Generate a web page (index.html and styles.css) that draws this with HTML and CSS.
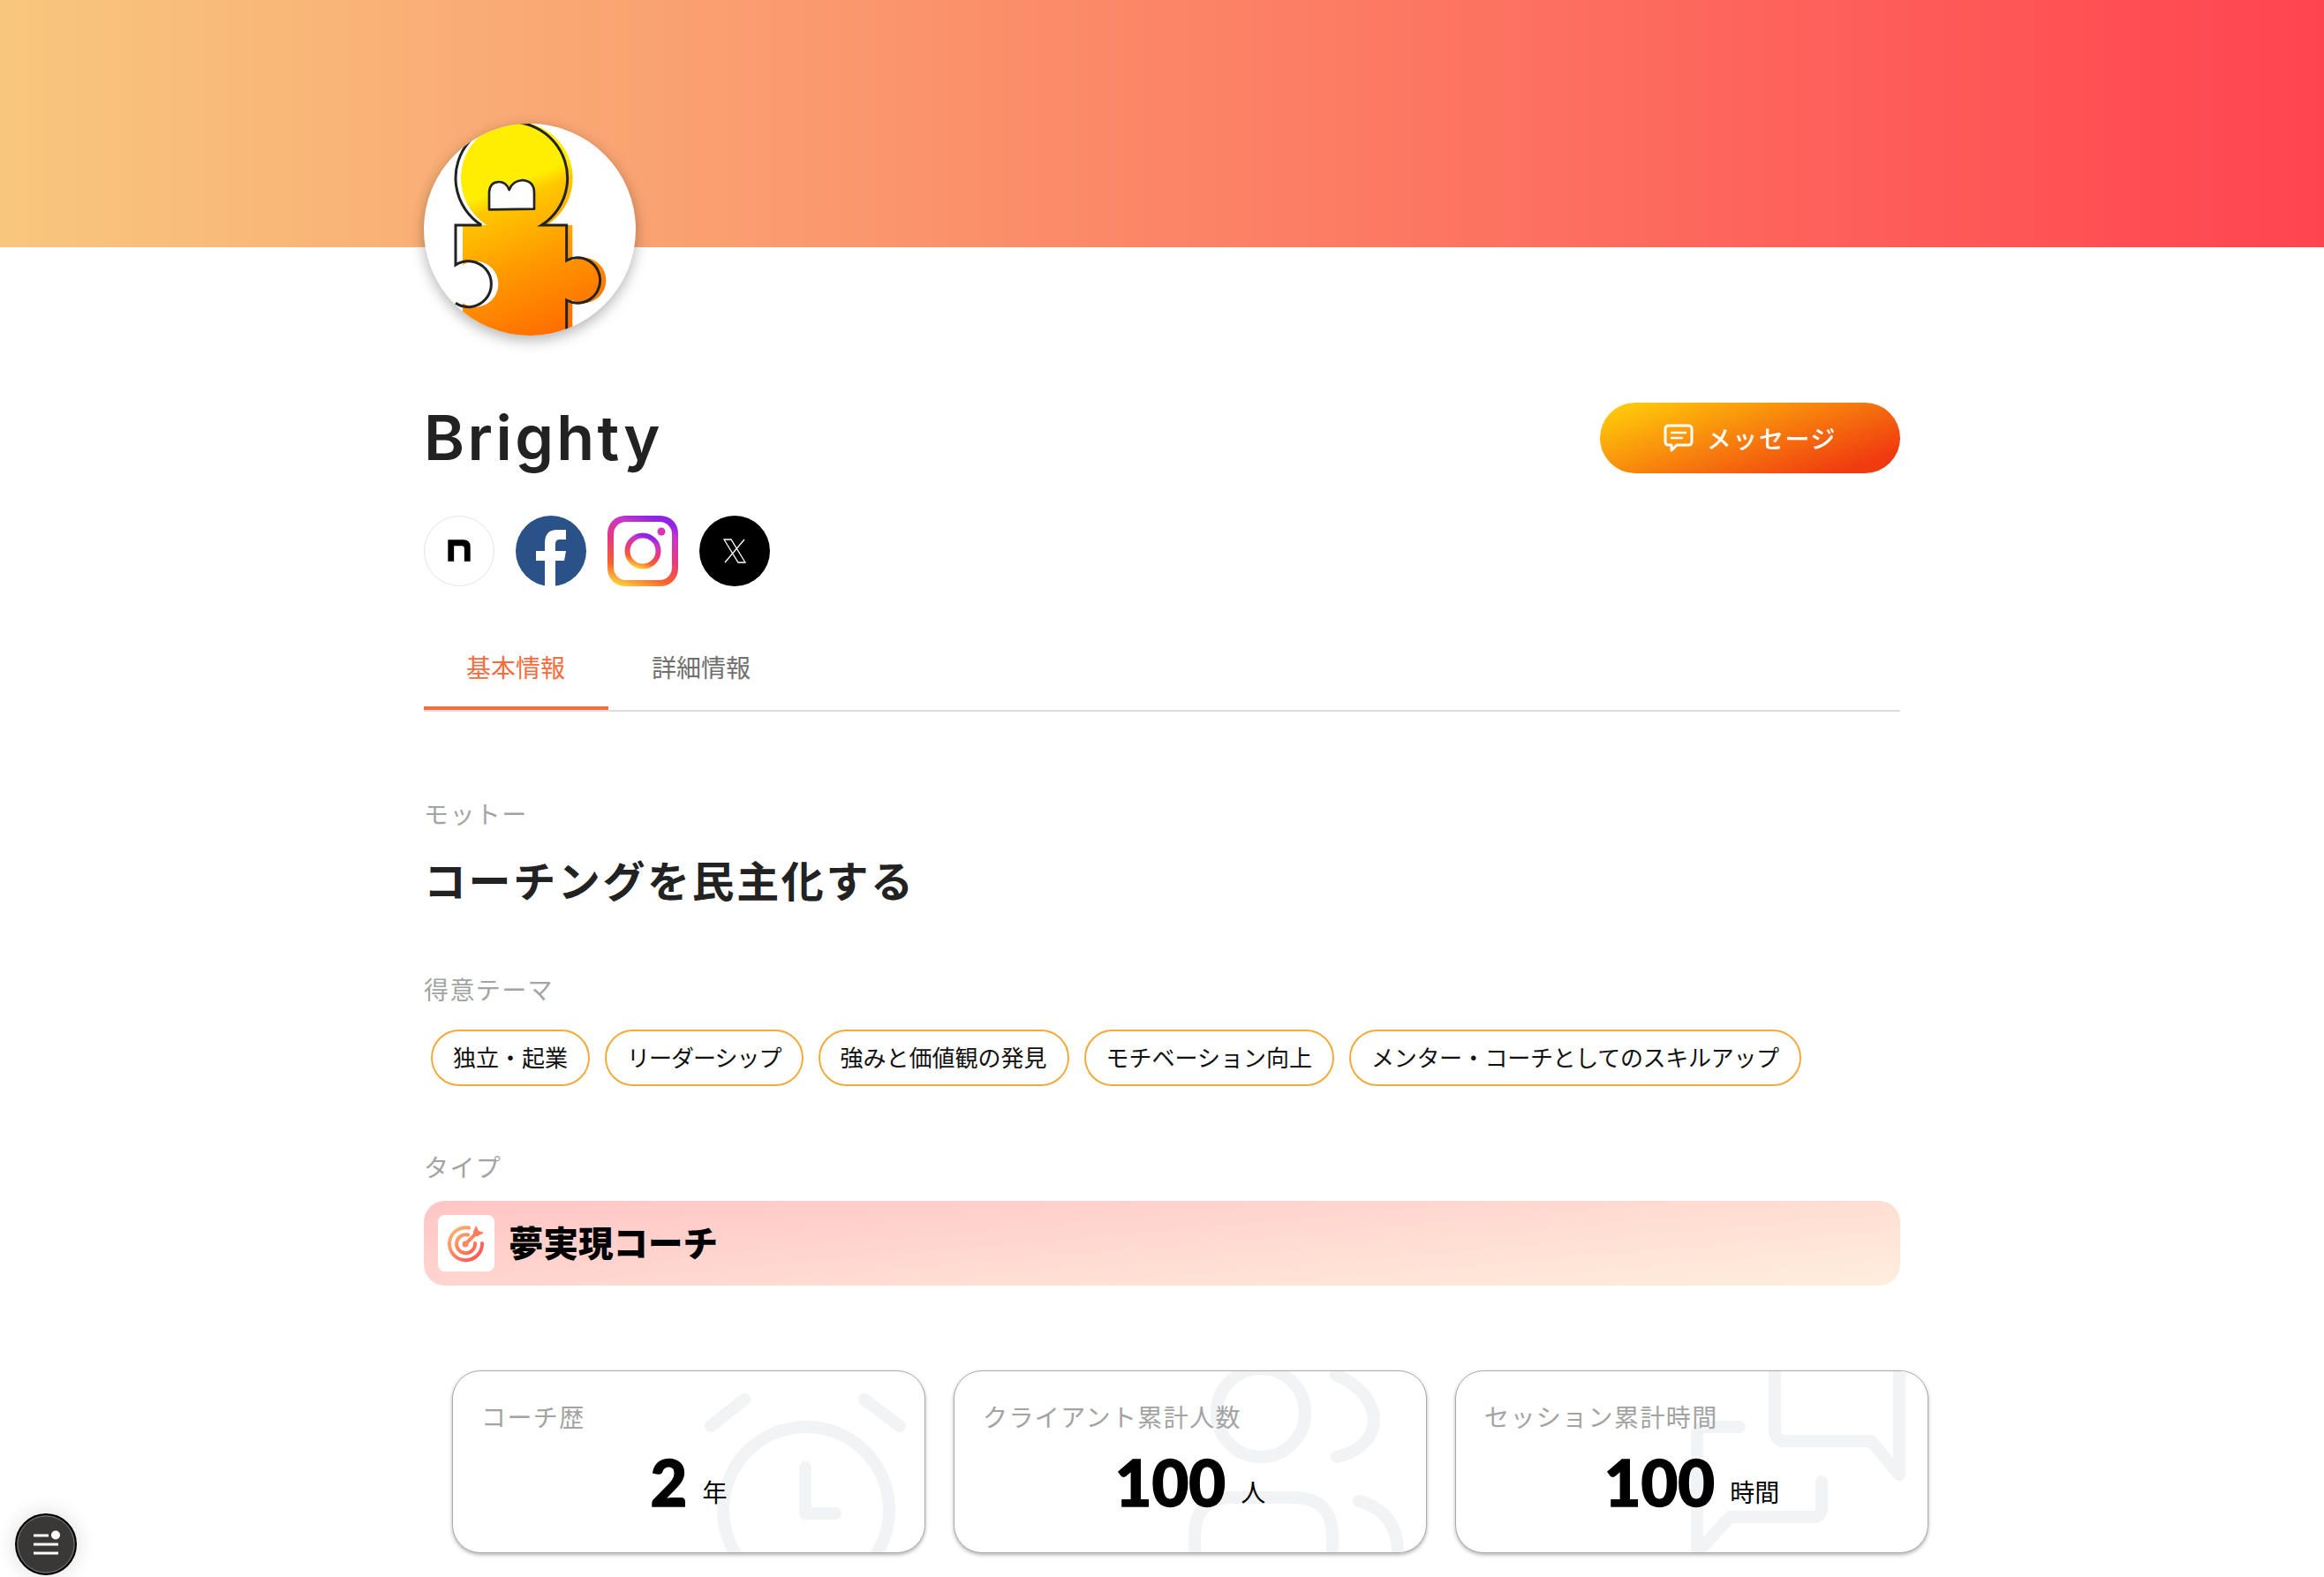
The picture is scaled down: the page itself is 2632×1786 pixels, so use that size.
FILE: index.html
```html
<!DOCTYPE html>
<html lang="ja">
<head>
<meta charset="UTF-8">
<meta name="viewport" content="width=device-width, initial-scale=1.0">
<title>Brighty</title>
<link rel="stylesheet" href="styles.css">
</head>
<body>
<div class="hero"></div>

<div class="container">
    <div class="avatar">
        <svg viewBox="120 60 720 720" width="240" height="240">
            <defs>
                <linearGradient id="puzzleFill" gradientUnits="userSpaceOnUse" x1="380" y1="230" x2="600" y2="780">
                    <stop offset="0" stop-color="#ffee00"/>
                    <stop offset="0.08" stop-color="#ffee00"/>
                    <stop offset="0.17" stop-color="#ffc800"/>
                    <stop offset="0.55" stop-color="#ff9800"/>
                    <stop offset="1" stop-color="#ff6a00"/>
                </linearGradient>
            </defs>
            <path class="puzzle-fill" d="M334 405A190 190 0 1 1 538 405H625V525A77 77 0 1 1 625 660V800H252V670A78 78 0 1 0 252 540V405Z" fill="url(#puzzleFill)"/>
            <path class="puzzle-line" d="M316 405A190 190 0 1 1 520 405H605V525A77 77 0 1 1 605 660V790M228 670A78 78 0 1 0 228 540V405H316"/>
            <path class="puzzle-mark" d="M342 352V292Q345 258 375 258Q400 258 410 285Q420 255 455 252Q495 255 495 295V350Z"/>
        </svg>
    </div>

    <div class="profile-head">
        <h1 class="name">Brighty</h1>
        <button type="button" class="message-btn">
            <svg viewBox="0 0 34 32" width="34" height="32" fill="none" stroke="#fff" stroke-width="3" stroke-linejoin="round" stroke-linecap="round">
                <path d="M6 2H28Q32 2 32 6V20Q32 24 28 24H15L9 30V24H6Q2 24 2 20V6Q2 2 6 2Z"/>
                <path d="M9 10H25M9 16H21" stroke-width="2.400"/>
            </svg>
            <span>メッセージ</span>
        </button>
    </div>

    <div class="social">
        <div class="social-icon note">
            <svg viewBox="0 0 80 80" width="78" height="78"><path d="M27 27H45Q53 27 53 35V52H46V37Q46 34 43 34H34V52H27Z"/></svg>
        </div>
        <div class="social-icon">
            <svg viewBox="0 0 80 80" width="80" height="80">
                <circle cx="40" cy="40" r="40" fill="#2a5288"/>
                <path d="M33 80V51H23V40H33V31Q33 16 47 16H57V27H50Q45 27 45 32V40H57L55 51H45V80Z" fill="#fff"/>
            </svg>
        </div>
        <div class="social-icon">
            <svg viewBox="0 0 80 80" width="80" height="80">
                <defs>
                    <linearGradient id="instaFill" x1="0.2" y1="1" x2="0.55" y2="0">
                        <stop offset="0" stop-color="#fdd33c"/>
                        <stop offset="0.25" stop-color="#f9602d"/>
                        <stop offset="0.55" stop-color="#e8397e"/>
                        <stop offset="0.85" stop-color="#c836c8"/>
                        <stop offset="1" stop-color="#8f24e6"/>
                    </linearGradient>
                </defs>
                <rect x="0" y="0" width="80" height="80" rx="20" fill="url(#instaFill)"/>
                <rect x="7" y="7" width="66" height="66" rx="14" fill="#fff"/>
                <circle cx="40" cy="40" r="17.500" fill="none" stroke="url(#instaFill)" stroke-width="6"/>
                <circle cx="61" cy="18" r="4.500" fill="#d834b4"/>
            </svg>
        </div>
        <div class="social-icon">
            <svg viewBox="0 0 80 80" width="80" height="80">
                <circle cx="40" cy="40" r="40"/>
                <path d="M28 27H36L52 53H44ZM51 27L29 53" fill="none" stroke="#fff" stroke-width="1.300"/>
            </svg>
        </div>
    </div>

    <div class="tabs">
        <div class="tab active">基本情報</div>
        <div class="tab">詳細情報</div>
    </div>

    <div class="label motto-label">モットー</div>
    <h2 class="motto">コーチングを民主化する</h2>

    <div class="label theme-label">得意テーマ</div>
    <div class="tags">
        <span class="tag">独立・起業</span>
        <span class="tag tag-tight">リーダーシップ</span>
        <span class="tag">強みと価値観の発見</span>
        <span class="tag">モチベーション向上</span>
        <span class="tag tag-long">メンター・コーチとしてのスキルアップ</span>
    </div>

    <div class="label type-label">タイプ</div>
    <div class="type-banner">
        <div class="type-icon">
            <svg viewBox="0 0 44 44" width="44" height="44" fill="none" stroke="url(#targetFill)" stroke-width="4" stroke-linecap="round">
                <defs>
                    <linearGradient id="targetFill" gradientUnits="userSpaceOnUse" x1="4" y1="6" x2="36" y2="42">
                        <stop offset="0" stop-color="#fbb86f"/>
                        <stop offset="1" stop-color="#ff4f55"/>
                    </linearGradient>
                </defs>
                <path d="M25 4.500A18.500 18.500 0 1 0 40 22"/>
                <path d="M24 12.500A10.500 10.500 0 1 0 32 22"/>
                <path d="M20 24L32 12"/>
                <path d="M30 9L33 2L36 8L42 10L35 14L30 14Z" fill="#fa7a5e" stroke="none"/>
                <circle cx="21" cy="23" r="3.500" fill="#fb8a62" stroke="none"/>
            </svg>
        </div>
        <div class="type-name">夢実現コーチ</div>
    </div>

    <div class="stats">
        <div class="stat-card">
            <svg class="stat-bg" viewBox="0 0 536 207">
                <circle cx="401" cy="158" r="94"/>
                <path d="M400 110V162H434M331 33L293 63M467 33L507 63"/>
            </svg>
            <div class="stat-label">コーチ歴</div>
            <div class="stat-value"><b>2</b><span>年</span></div>
        </div>
        <div class="stat-card">
            <svg class="stat-bg" viewBox="0 0 536 207">
                <circle cx="348" cy="48" r="50"/>
                <path d="M433 5C490 30 490 85 434 98M273 207V188Q273 144 317 144H385Q429 144 429 188V207M459 148Q503 160 503 207"/>
            </svg>
            <div class="stat-label">クライアント累計人数</div>
            <div class="stat-value"><b>100</b><span>人</span></div>
        </div>
        <div class="stat-card">
            <svg class="stat-bg" viewBox="0 0 536 207">
                <path d="M362 -5V68Q362 80 374 80H471L503 118V-5"/>
                <path d="M322 64H283Q274 64 274 73V207L311 166H405Q415 166 415 156V126"/>
            </svg>
            <div class="stat-label">セッション累計時間</div>
            <div class="stat-value"><b>100</b><span>時間</span></div>
        </div>
    </div>
</div>

<div class="menu-btn">
    <svg viewBox="0 0 70 70" width="70" height="70">
        <circle cx="35" cy="35" r="34" fill="#3a3836" stroke="#000" stroke-width="2"/>
        <circle cx="35" cy="35" r="32" fill="none" stroke="#77757a" stroke-width="1"/>
        <path d="M21 25H38M21 35H49M21 45H49" stroke="#fff" stroke-width="3"/>
        <circle cx="46" cy="24.500" r="5" fill="#fff"/>
    </svg>
</div>
</body>
</html>
```

FILE: styles.css
```css
html, body {
    height: 100%;
}
body {
    font-family: "Noto Sans CJK JP", "Noto Sans", sans-serif;
    color: #222;
    background-color: #fff;
    margin: 0;
    padding: 0;
    overflow: hidden;
}
.hero {
    height: 280px;
    background: linear-gradient(90deg, #f8c77e, #ff4450);
}
.container {
    width: 1672px;
    margin: 0 auto;
}
.avatar {
    width: 240px;
    height: 240px;
    margin-top: -140px;
    border-radius: 50%;
    background-color: #fff;
    box-shadow: 0 5px 16px rgba(0, 0, 0, 0.3);
    overflow: hidden;
    position: relative;
}
.avatar svg {
    display: block;
}
.puzzle-line {
    fill: none;
    stroke: #222;
    stroke-width: 9;
}
.puzzle-mark {
    fill: #fff;
    stroke: #222;
    stroke-width: 8;
    stroke-linejoin: round;
}
.profile-head {
    display: flex;
    justify-content: space-between;
    align-items: center;
    margin-top: 76px;
}
.name {
    font-family: Inter, sans-serif;
    font-size: 70px;
    font-weight: 600;
    line-height: 80px;
    letter-spacing: 3.400px;
    margin: 0;
    color: #222;
}
.message-btn {
    display: flex;
    align-items: center;
    justify-content: center;
    gap: 15px;
    width: 340px;
    height: 80px;
    border: none;
    border-radius: 40px;
    background: linear-gradient(160deg, #ffc60a 8%, #f03a10 88%);
    color: #fff;
    font-family: inherit;
    font-size: 28px;
    font-weight: 500;
    letter-spacing: 1.600px;
    cursor: pointer;
}
.social {
    display: flex;
    gap: 24px;
    margin-top: 48px;
}
.social-icon {
    width: 80px;
    height: 80px;
}
.social-icon svg {
    display: block;
}
.note {
    box-sizing: border-box;
    border: 1px solid #e4e4e4;
    border-radius: 50%;
}
.tabs {
    display: flex;
    margin-top: 48px;
    border-bottom: 2px solid #ddd;
}
.tab {
    padding: 23px 49px 25px;
    border-bottom: 4px solid transparent;
    font-size: 28px;
    line-height: 40px;
    color: #6f6f6f;
}
.tab.active {
    padding-left: 48px;
    padding-right: 49px;
    color: #f96a3d;
    border-bottom-color: #f96a3d;
}
.label {
    font-size: 28px;
    line-height: 40px;
    letter-spacing: 1.400px;
    color: #a3a3a3;
}
.motto-label {
    margin-top: 95px;
}
.motto {
    font-size: 48px;
    font-weight: 700;
    line-height: 64px;
    letter-spacing: 2.600px;
    margin: 22px 0 0;
    color: #222;
}
.theme-label {
    margin-top: 73px;
}
.tags {
    display: flex;
    gap: 17px;
    margin: 26px 0 0 8px;
}
.tag {
    box-sizing: border-box;
    height: 64px;
    padding: 0 23px;
    border: 2px solid #f0ab3c;
    border-radius: 32px;
    font-size: 26px;
    line-height: 58px;
    color: #111;
    white-space: nowrap;
}
.tag-tight {
    letter-spacing: -1px;
}
.tag-long {
    letter-spacing: -0.300px;
}
.type-label {
    margin-top: 71px;
}
.type-banner {
    display: flex;
    align-items: center;
    gap: 16px;
    height: 96px;
    margin-top: 19px;
    padding-left: 16px;
    border-radius: 24px;
    background: linear-gradient(175deg, #ffc5c5, #ffeedd);
}
.type-icon {
    display: flex;
    align-items: center;
    justify-content: center;
    width: 64px;
    height: 64px;
    border-radius: 8px;
    background-color: #fff;
}
.type-name {
    font-size: 39.500px;
    font-weight: 900;
    line-height: 60px;
    padding-bottom: 4px;
    color: #000;
}
.stats {
    display: flex;
    gap: 32px;
    width: 1672px;
    margin: 96px 0 0 32px;
}
.stat-card {
    box-sizing: border-box;
    position: relative;
    flex: 0 0 536px;
    height: 207px;
    padding: 31px 32px;
    border: 1px solid #aaa;
    border-radius: 32px;
    box-shadow: 0 2px 4px rgba(0, 0, 0, 0.3);
    background-color: #fff;
    overflow: hidden;
}
.stat-bg {
    position: absolute;
    left: -1px;
    top: -1px;
    width: 536px;
    height: 207px;
    fill: none;
    stroke: #f2f3f5;
    stroke-width: 14;
    stroke-linecap: round;
    stroke-linejoin: round;
}
.stat-label {
    position: relative;
    font-size: 28px;
    line-height: 40px;
    letter-spacing: 1.400px;
    color: #a3a3a3;
}
.stat-value {
    position: relative;
    display: flex;
    justify-content: center;
    align-items: flex-end;
    gap: 17px;
    margin-top: 12px;
    color: #000;
}
.stat-value b {
    font-family: Lato, sans-serif;
    font-size: 72px;
    font-weight: 900;
    line-height: 84px;
    -webkit-text-stroke: 1.500px #000;
}
.stat-value span {
    font-size: 28px;
    line-height: 40px;
    margin-bottom: 11px;
}
.menu-btn {
    position: fixed;
    left: 17px;
    bottom: 2px;
    width: 70px;
    height: 70px;
    border-radius: 50%;
    box-shadow: 0 0 24px rgba(0, 0, 0, 0.14);
}
.menu-btn svg {
    display: block;
}
```
